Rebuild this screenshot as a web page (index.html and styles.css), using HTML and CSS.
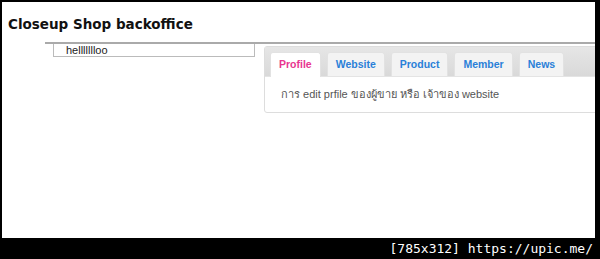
FILE: index.html
```html
<!DOCTYPE html>
<html lang="th">
<head>
    <meta charset="UTF-8">
    <title>Closeup Shop backoffice</title>
    <link rel="stylesheet" href="styles.css">
</head>
<body>
    <div class="shot">
        <h1 class="title">Closeup Shop backoffice</h1>
        <div class="main">
            <div class="side">
                <div class="hello">hellllllloo</div>
            </div>
            <div class="tabs-panel">
                <ul class="tab-bar">
                    <li class="tab active">Profile</li>
                    <li class="tab">Website</li>
                    <li class="tab">Product</li>
                    <li class="tab">Member</li>
                    <li class="tab">News</li>
                </ul>
                <div class="tab-content">การ edit prfile ของผู้ขาย หรือ เจ้าของ website</div>
            </div>
        </div>
    </div>
    <div class="credit">[785x312] https://upic.me/</div>
</body>
</html>
```

FILE: styles.css
```css
body {
    margin: 0;
    background-color: #000;
    font-family: "Liberation Sans", Arial, sans-serif;
}
.shot {
    background-color: #fff;
    margin: 2px 5px 0 2px;
    height: 236px;
    overflow: hidden;
}
.title {
    font-family: "DejaVu Sans", Verdana, sans-serif;
    font-size: 13.5px;
    line-height: 16px;
    font-weight: bold;
    color: #111;
    margin: 0;
    padding: 14px 0 0 6px;
}
.main {
    display: flex;
    align-items: flex-start;
    margin: 10px 0 0 43px;
    border-top: 2px solid #aaa;
}
.side {
    margin-left: 8px;
}
.hello {
    width: 188px;
    height: 12px;
    padding-left: 12px;
    border: 1px solid #bbb;
    border-top: none;
    font-size: 11px;
    line-height: 12px;
    color: #222;
}
.tabs-panel {
    flex: 1;
    margin: 2px -20px 0 9px;
    border: 1px solid #ddd;
    border-radius: 3px;
}
.tab-bar {
    display: flex;
    gap: 6px;
    list-style: none;
    margin: 0;
    padding: 5px 0 0 5px;
    height: 24px;
    background: linear-gradient(#e6e6e6, #d9d9d9);
    border-bottom: 1px solid #e4e4e4;
}
.tab {
    padding: 0 8px;
    height: 24px;
    line-height: 22px;
    font-size: 10.5px;
    font-weight: bold;
    color: #2a80d8;
    background-color: #f3f3f3;
    border: 1px solid #e2e2e2;
    border-bottom: none;
    border-radius: 3px 3px 0 0;
    box-sizing: border-box;
}
.tab.active {
    color: #e8358f;
    background-color: #fff;
    height: 25px;
    margin-bottom: -1px;
}
.tab-content {
    padding: 10px 16px 11px;
    font-size: 11px;
    line-height: 14px;
    color: #555;
}
.credit {
    height: 21px;
    line-height: 21px;
    text-align: right;
    padding-right: 7px;
    font-family: "DejaVu Sans Mono", monospace;
    font-size: 13px;
    color: #fff;
}
```
